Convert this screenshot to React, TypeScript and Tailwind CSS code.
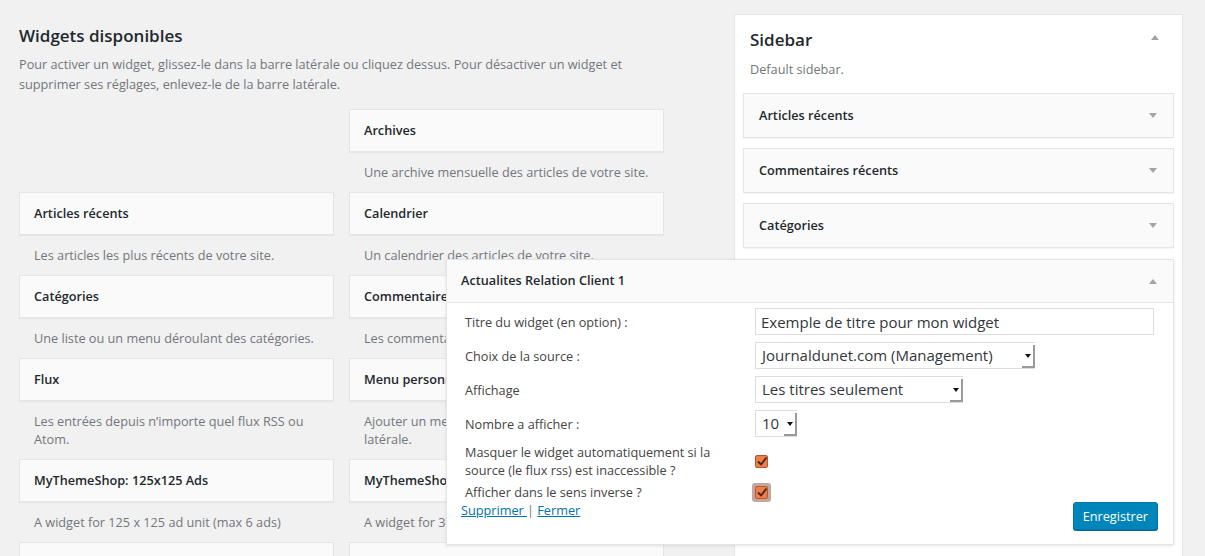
type Item = { t: string; d: string } | null;

const col1: Item[] = [
  null,
  { t: "Articles récents", d: "Les articles les plus récents de votre site." },
  { t: "Catégories", d: "Une liste ou un menu déroulant des catégories." },
  { t: "Flux", d: "Les entrées depuis n’importe quel flux RSS ou Atom." },
  { t: "MyThemeShop: 125x125 Ads", d: "A widget for 125 x 125 ad unit (max 6 ads)" },
  { t: "MyThemeShop: Facebook Like Box", d: "Facebook like box pour votre site." },
];

const col2: Item[] = [
  { t: "Archives", d: "Une archive mensuelle des articles de votre site." },
  { t: "Calendrier", d: "Un calendrier des articles de votre site." },
  { t: "Commentaires récents", d: "Les commentaires les plus récents." },
  { t: "Menu personnalisé", d: "Ajouter un menu personnalisé à votre barre latérale." },
  { t: "MyThemeShop: 300x250 Ads", d: "A widget for 300 x 250 ad unit" },
  { t: "MyThemeShop: Tweets", d: "Vos derniers tweets." },
];

function Arrow({ up }: { up?: boolean }) {
  return (
    <svg width="8" height="5" viewBox="0 0 8 5">
      <path d={up ? "M0 5L4 0L8 5Z" : "M0 0L8 0L4 5Z"} fill="#a0a5aa" />
    </svg>
  );
}

function Widget({ item }: { item: Item }) {
  if (!item) return <div className="h-[83px]" />;
  return (
    <div>
      <div className="flex h-[43px] items-center border border-[#e5e5e5] bg-[#fafafa] px-[14px] text-[12.7px] font-semibold text-[#23282d] shadow-[0_1px_1px_rgba(0,0,0,0.04)]">
        {item.t}
      </div>
      <p className="px-[15px] py-[11px] text-[12.7px] leading-[18px] text-[#72777c]">{item.d}</p>
    </div>
  );
}

function SideCard({ title }: { title: string }) {
  return (
    <div className="flex h-[45px] items-center justify-between border border-[#e5e5e5] bg-[#fafafa] pl-[15px] pr-[16px] text-[12.7px] font-semibold text-[#23282d] shadow-[0_1px_1px_rgba(0,0,0,0.04)]">
      <span>{title}</span>
      <Arrow />
    </div>
  );
}

function Select({ value, width }: { value: string; width: string }) {
  return (
    <div className={`flex h-[27px] border border-r-0 border-[#ddd] bg-white ${width}`}>
      <span className="flex-1 truncate pl-[6px] text-[15px] leading-[25px] text-[#32373c]">{value}</span>
      <span className="mt-[2px] flex w-[13px] items-center justify-center border-r-2 border-b-2 border-[#9a9a9a]">
        <svg width="6" height="4" viewBox="0 0 6 4">
          <path d="M0 0L6 0L3 4Z" fill="#111" />
        </svg>
      </span>
    </div>
  );
}

function Check({ focus }: { focus?: boolean }) {
  const box = (
    <span className="flex h-[13px] w-[13px] items-center justify-center rounded-[2px] border border-[#b4582f] bg-[#ec7d4c]">
      <svg width="10" height="9" viewBox="0 0 10 9">
        <path d="M1 4.5L4 7.5L9.5 0.5" fill="none" stroke="#4a2412" strokeWidth="1.8" />
      </svg>
    </span>
  );
  if (!focus) return box;
  return <span className="flex h-[19px] w-[19px] items-center justify-center rounded-[3px] bg-[#c2a79f]">{box}</span>;
}

export default function App() {
  return (
    <div className="flex h-[556px] w-[1205px] overflow-hidden bg-[#f1f1f1] font-['Open_Sans',sans-serif] text-[#23282d]">
      <div className="w-[664px] shrink-0 pl-[19px] pt-[24px]">
        <h2 className="text-[17px] font-semibold leading-[24px]">Widgets disponibles</h2>
        <p className="mt-[6px] text-[12.7px] leading-[20px] text-[#72777c]">
          Pour activer un widget, glissez-le dans la barre latérale ou cliquez dessus. Pour désactiver un widget et supprimer ses réglages, enlevez-le de la barre latérale.
        </p>
        <div className="mt-[15px] grid grid-cols-[315px_315px] gap-x-[15px]">
          <div className="flex flex-col">
            {col1.map((it, i) => (
              <Widget key={i} item={it} />
            ))}
          </div>
          <div className="flex flex-col">
            {col2.map((it, i) => (
              <Widget key={i} item={it} />
            ))}
          </div>
        </div>
      </div>

      <div className="ml-[70px] mt-[14px] w-[449px] shrink-0 self-start border border-[#e5e5e5] bg-white px-[8px] pb-[40px] shadow-[0_1px_1px_rgba(0,0,0,0.04)]">
        <div className="flex items-center justify-between px-[7px] pt-[13px]">
          <h2 className="text-[17px] font-semibold leading-[24px]">Sidebar</h2>
          <span className="mr-[8px] -mt-[6px]">
            <Arrow up />
          </span>
        </div>
        <p className="mt-[8px] px-[7px] text-[12.7px] leading-[18px] text-[#72777c]">Default sidebar.</p>
        <div className="mt-[15px] flex flex-col gap-[10px]">
          <SideCard title="Articles récents" />
          <SideCard title="Commentaires récents" />
          <SideCard title="Catégories" />
        </div>

        <div className="relative z-10 ml-[-297px] mt-[11px] w-[728px] border border-[#e5e5e5] bg-white shadow-[0_1px_3px_rgba(0,0,0,0.1)]">
          <div className="flex h-[43px] items-center justify-between border-b border-[#e5e5e5] bg-[#fafafa] pl-[14px] pr-[16px] text-[12.7px] font-semibold">
            <span>Actualites Relation Client 1</span>
            <Arrow up />
          </div>
          <div className="pl-[18px] pr-[19px] pt-[5px] text-[12.7px] leading-[18px] text-[#444]">
            <div className="flex h-[27px] items-center">
              <span className="w-[290px]">Titre du widget (en option) :</span>
              <div className="flex h-[27px] flex-1 items-center border border-[#ddd] pl-[5px] text-[15px] text-[#32373c]">
                Exemple de titre pour mon widget
              </div>
            </div>
            <div className="mt-[7px] flex h-[27px] items-center">
              <span className="w-[290px]">Choix de la source :</span>
              <Select value="Journaldunet.com (Management)" width="w-[280px]" />
            </div>
            <div className="mt-[7px] flex h-[27px] items-center">
              <span className="w-[290px]">Affichage</span>
              <Select value="Les titres seulement" width="w-[208px]" />
            </div>
            <div className="mt-[7px] flex h-[27px] items-center">
              <span className="w-[290px]">Nombre a afficher :</span>
              <Select value="10" width="w-[42px]" />
            </div>
            <div className="mt-[6px] flex items-center">
              <span className="w-[290px] pr-[24px]">Masquer le widget automatiquement si la source (le flux rss) est inaccessible ?</span>
              <Check />
            </div>
            <div className="mt-[4px] flex h-[18px] items-center">
              <span className="w-[287px]">Afficher dans le sens inverse ?</span>
              <Check focus />
            </div>
          </div>
          <div className="flex items-start justify-between pb-[14px] pl-[14px] pr-[15px] text-[12.7px] leading-[18px]">
            <div className="text-[#72777c]">
              <a href="#" className="text-[#0073aa] underline">Supprimer </a> |{" "}
              <a href="#" className="text-[#0073aa] underline">Fermer</a>
            </div>
            <button className="mt-[1px] h-[28px] rounded-[3px] border border-[#0073aa] bg-[#0085ba] px-[9px] text-[12.7px] text-white shadow-[0_1px_0_#006799]">
              Enregistrer
            </button>
          </div>
        </div>
      </div>
    </div>
  );
}
